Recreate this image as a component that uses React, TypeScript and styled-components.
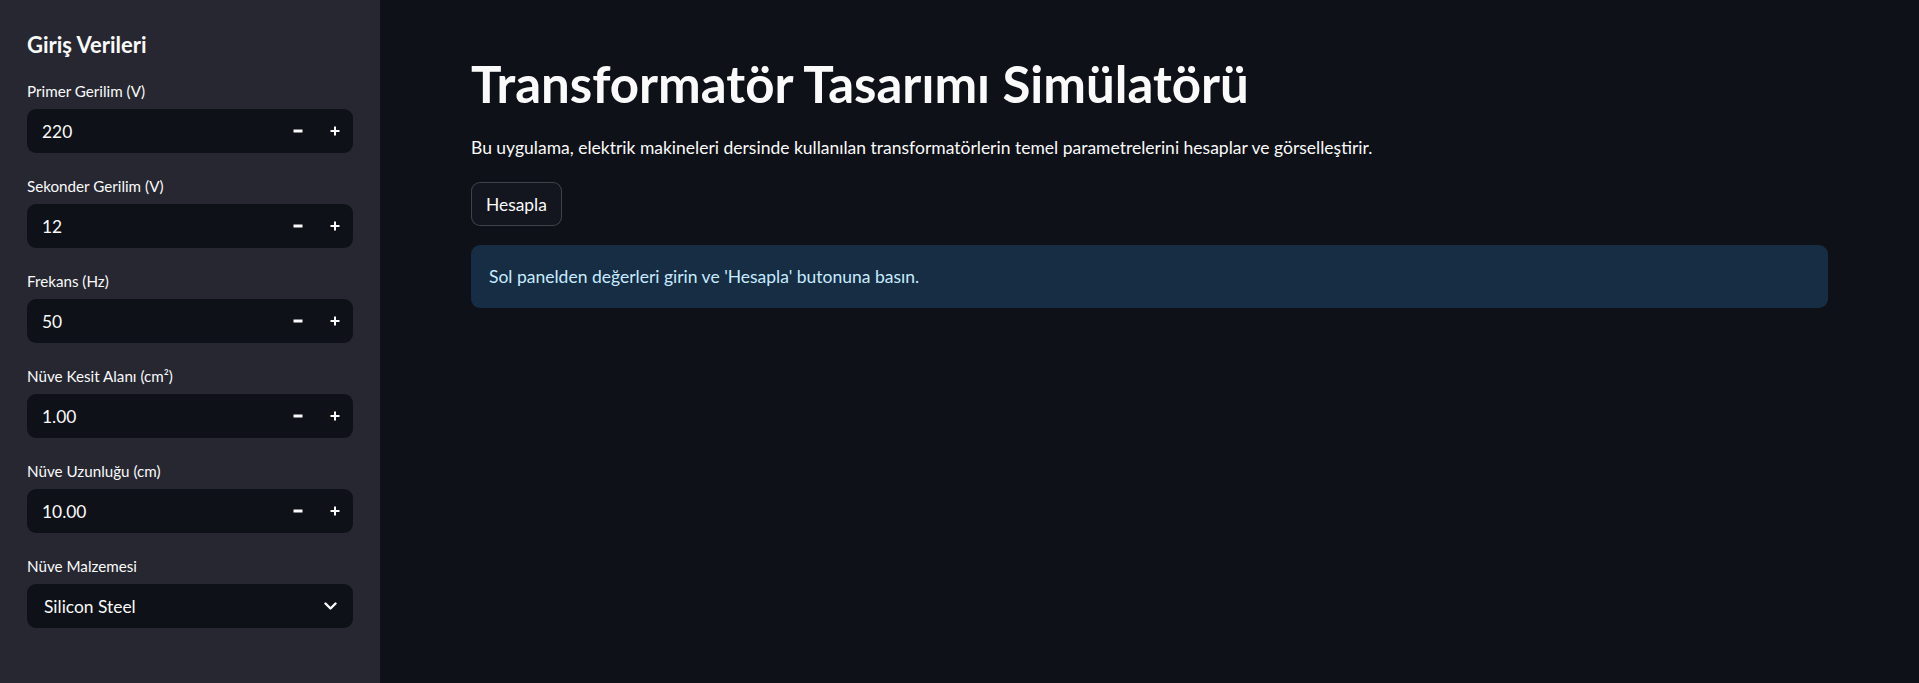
import React from "react";
import styled, { createGlobalStyle } from "styled-components";

const GlobalStyle = createGlobalStyle`
  html, body {
    margin: 0;
    padding: 0;
    background: #0e1117;
  }
  body {
    font-family: Lato, "Noto Sans", "Liberation Sans", sans-serif;
    color: #fafafa;
    -webkit-font-smoothing: antialiased;
  }
  * { box-sizing: border-box; }
`;

const Shell = styled.div`
  display: flex;
  width: 100%;
  min-height: 683px;
  background: #0e1117;
`;

const Sidebar = styled.aside`
  width: 380px;
  flex: 0 0 380px;
  background: #262730;
  padding: 32px 27px 27px;
  display: flex;
  flex-direction: column;
  gap: 22px;
`;

const SidebarTitle = styled.h2`
  margin: 0;
  font-size: 22px;
  font-weight: 700;
  line-height: 1.2;
  color: #fafafa;
`;

const Field = styled.div`
  display: flex;
  flex-direction: column;
  gap: 7px;
`;

const Label = styled.label`
  font-size: 15.2px;
  line-height: 22px;
  color: #fafafa;
`;

const InputBox = styled.div`
  display: flex;
  align-items: center;
  height: 44px;
  background: #0e1117;
  border-radius: 9px;
  overflow: hidden;
`;

const Value = styled.span<{ $pad?: number }>`
  flex: 1;
  padding-left: ${(p) => p.$pad ?? 15}px;
  font-size: 17.4px;
  color: #fafafa;
`;

const StepButton = styled.button`
  width: 37px;
  height: 44px;
  display: flex;
  align-items: center;
  justify-content: center;
  background: transparent;
  border: none;
  padding: 0;
  color: #fafafa;
  cursor: pointer;
`;

const Chevron = styled.span`
  display: flex;
  align-items: center;
  justify-content: center;
  width: 40px;
  height: 44px;
  margin-right: 3px;
`;

const Main = styled.main`
  flex: 1;
  padding: 53px 91px 40px;
  display: flex;
  flex-direction: column;
`;

const Title = styled.h1`
  margin: 0 0 20px;
  font-size: 51px;
  font-weight: 700;
  line-height: 1.2;
  color: #fafafa;
`;

const Paragraph = styled.p`
  margin: 0 0 21px;
  font-size: 17.5px;
  line-height: 27px;
  color: #fafafa;
`;

const Button = styled.button`
  align-self: flex-start;
  height: 44px;
  padding: 0 14px;
  background: #13161e;
  color: #fafafa;
  border: 1px solid rgba(250, 250, 250, 0.2);
  border-radius: 9px;
  font-family: inherit;
  font-size: 17.4px;
  cursor: pointer;
  margin-bottom: 19px;
`;

const InfoBox = styled.div`
  background: #172d43;
  border-radius: 9px;
  padding: 18px 18px;
  min-height: 63px;
  display: flex;
  align-items: center;
  color: #c7ebff;
  font-size: 17.5px;
  line-height: 27px;
`;

const MinusIcon = () => (
  <svg width="10" height="4" viewBox="0 0 10 4">
    <rect x="0.5" y="0.5" width="9" height="3" fill="#fafafa" />
  </svg>
);

const PlusIcon = () => (
  <svg width="10" height="10" viewBox="0 0 10 10">
    <rect x="0.5" y="4" width="9" height="2" fill="#fafafa" />
    <rect x="4" y="0.5" width="2" height="9" fill="#fafafa" />
  </svg>
);

const ChevronIcon = () => (
  <svg width="13" height="9" viewBox="0 0 13 9">
    <polyline
      points="1.5,1.5 6.5,6.5 11.5,1.5"
      fill="none"
      stroke="#fafafa"
      strokeWidth="2.4"
      strokeLinecap="round"
      strokeLinejoin="round"
    />
  </svg>
);

const NumberField = ({ label, value }: { label: string; value: string }) => (
  <Field>
    <Label>{label}</Label>
    <InputBox>
      <Value>{value}</Value>
      <StepButton aria-label="decrement">
        <MinusIcon />
      </StepButton>
      <StepButton aria-label="increment">
        <PlusIcon />
      </StepButton>
    </InputBox>
  </Field>
);

const fields = [
  { label: "Primer Gerilim (V)", value: "220" },
  { label: "Sekonder Gerilim (V)", value: "12" },
  { label: "Frekans (Hz)", value: "50" },
  { label: "Nüve Kesit Alanı (cm²)", value: "1.00" },
  { label: "Nüve Uzunluğu (cm)", value: "10.00" },
];

export default function App() {
  return (
    <>
      <GlobalStyle />
      <Shell>
        <Sidebar>
          <SidebarTitle>Giriş Verileri</SidebarTitle>
          {fields.map((f) => (
            <NumberField key={f.label} label={f.label} value={f.value} />
          ))}
          <Field>
            <Label>Nüve Malzemesi</Label>
            <InputBox>
              <Value $pad={17}>Silicon Steel</Value>
              <Chevron>
                <ChevronIcon />
              </Chevron>
            </InputBox>
          </Field>
        </Sidebar>
        <Main>
          <Title>Transformatör Tasarımı Simülatörü</Title>
          <Paragraph>
            Bu uygulama, elektrik makineleri dersinde kullanılan transformatörlerin temel
            parametrelerini hesaplar ve görselleştirir.
          </Paragraph>
          <Button>Hesapla</Button>
          <InfoBox>Sol panelden değerleri girin ve 'Hesapla' butonuna basın.</InfoBox>
        </Main>
      </Shell>
    </>
  );
}
